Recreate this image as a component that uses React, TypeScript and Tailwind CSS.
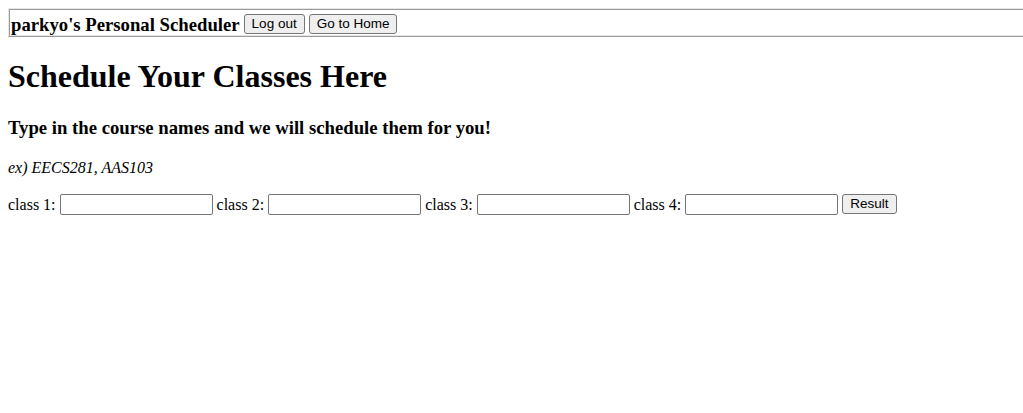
export default function App() {
  const btn =
    "inline-block align-middle h-[20px] px-[7px] rounded-[3px] border border-[#767676] bg-[#efefef] text-[13.5px] leading-[18px] text-black [font-family:'Liberation_Sans',Arial,sans-serif]";
  const input =
    "inline-block align-middle w-[153px] h-[21px] rounded-[2px] border border-[#767676] bg-white px-[2px] text-[13.33px]";

  const fields = ["class 1", "class 2", "class 3", "class 4"];

  return (
    <div className="min-h-screen overflow-hidden bg-white text-black [font-family:'Liberation_Serif','Times_New_Roman',serif]">
      {/* Top bar */}
      <div className="ml-2 mt-2 border-l border-t border-b border-l-[#e6e6e6] border-t-[#e6e6e6] border-b-[#9a9a9a]">
        <div className="h-[27px] border-l border-t border-b border-l-[#9a9a9a] border-t-[#9a9a9a] border-b-[#e6e6e6] pl-[1px] whitespace-nowrap leading-[25px]">
          <span className="align-middle text-[18.72px] font-bold">parkyo's Personal Scheduler</span>{" "}
          <button className={btn}>Log out</button>{" "}
          <button className={btn}>Go to Home</button>
        </div>
      </div>

      <div className="px-2">
        <h1 className="mt-[21px] mb-[22px] text-[32px] font-bold leading-[37px]">Schedule Your Classes Here</h1>
        <h3 className="mb-[20px] text-[18.72px] font-bold leading-[22px]">
          Type in the course names and we will schedule them for you!
        </h3>
        <p className="mb-[14px] text-[16px] italic leading-[18px]">ex) EECS281, AAS103</p>
        <form className="text-[16px] leading-[23px] whitespace-nowrap" onSubmit={(e) => e.preventDefault()}>
          {fields.map((f) => (
            <span key={f}>
              <label className="align-middle">{f}:</label> <input className={input} type="text" />{" "}
            </span>
          ))}
          <button type="submit" className={btn}>
            Result
          </button>
        </form>
      </div>
    </div>
  );
}
